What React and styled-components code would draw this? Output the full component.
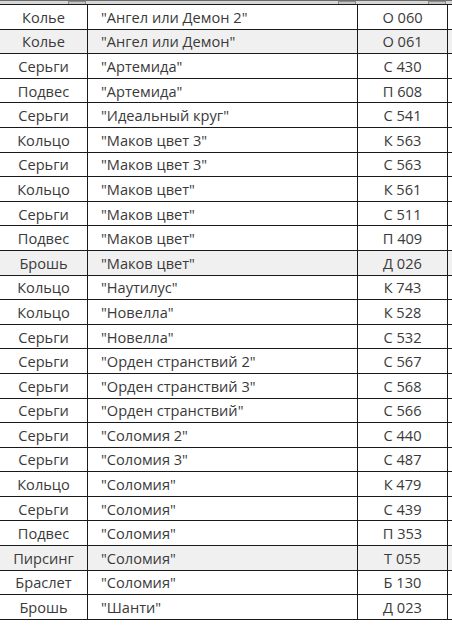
import styled, { createGlobalStyle } from 'styled-components';

const GlobalStyle = createGlobalStyle`
  html, body {
    margin: 0;
    padding: 0;
    background: #ffffff;
  }
  body {
    font-family: "Open Sans", "Noto Sans", sans-serif;
  }
`;

const COLS = '88px 270px 90px 4px';

const Sheet = styled.div`
  width: 452px;
  height: 626px;
  overflow: hidden;
  background: #ffffff;
`;

const HeaderStrip = styled.div`
  display: grid;
  grid-template-columns: ${COLS};
  height: 3px;
  border-top: 1px solid #6a6a6a;
  border-bottom: 1px solid #1a1a1a;
  background: #d6d6d6;
  overflow: hidden;
`;

const HeaderCell = styled.div`
  display: flex;
  justify-content: flex-end;
  align-items: flex-end;
  padding-right: 2px;
`;

const FilterButton = styled.div`
  width: 18px;
  height: 16px;
  box-sizing: border-box;
  border: 1px solid #8c8c8c;
  background: #c4c4c4;
`;

const Row = styled.div`
  display: grid;
  grid-template-columns: ${COLS};
  height: 24.6px;
  box-sizing: border-box;
  border-bottom: 1px solid #1a1a1a;
  background: ${(p) => (p.$shade ? '#f0f0f0' : '#ffffff')};
`;

const Cell = styled.div`
  display: flex;
  align-items: center;
  justify-content: ${(p) => p.$align || 'center'};
  padding-left: ${(p) => (p.$align === 'flex-start' ? '13px' : '0')};
  border-right: ${(p) => (p.$last ? 'none' : '1px solid #1a1a1a')};
  font-size: 14.6px;
  font-weight: 400;
  color: #3a3a3a;
  white-space: nowrap;
  overflow: hidden;
`;

const rows = [
  ['Колье', '"Ангел или Демон 2"', 'О 060', false],
  ['Колье', '"Ангел или Демон"', 'О 061', true],
  ['Серьги', '"Артемида"', 'С 430', false],
  ['Подвес', '"Артемида"', 'П 608', false],
  ['Серьги', '"Идеальный круг"', 'С 541', false],
  ['Кольцо', '"Маков цвет 3"', 'К 563', false],
  ['Серьги', '"Маков цвет 3"', 'С 563', false],
  ['Кольцо', '"Маков цвет"', 'К 561', false],
  ['Серьги', '"Маков цвет"', 'С 511', false],
  ['Подвес', '"Маков цвет"', 'П 409', false],
  ['Брошь', '"Маков цвет"', 'Д 026', true],
  ['Кольцо', '"Наутилус"', 'К 743', false],
  ['Кольцо', '"Новелла"', 'К 528', false],
  ['Серьги', '"Новелла"', 'С 532', false],
  ['Серьги', '"Орден странствий 2"', 'С 567', false],
  ['Серьги', '"Орден странствий 3"', 'С 568', false],
  ['Серьги', '"Орден странствий"', 'С 566', false],
  ['Серьги', '"Соломия 2"', 'С 440', false],
  ['Серьги', '"Соломия 3"', 'С 487', false],
  ['Кольцо', '"Соломия"', 'К 479', false],
  ['Серьги', '"Соломия"', 'С 439', false],
  ['Подвес', '"Соломия"', 'П 353', false],
  ['Пирсинг', '"Соломия"', 'Т 055', true],
  ['Браслет', '"Соломия"', 'Б 130', false],
  ['Брошь', '"Шанти"', 'Д 023', false],
];

export default function App() {
  return (
    <Sheet>
      <GlobalStyle />
      <HeaderStrip>
        <HeaderCell><FilterButton /></HeaderCell>
        <HeaderCell><FilterButton /></HeaderCell>
        <HeaderCell><FilterButton /></HeaderCell>
        <HeaderCell />
      </HeaderStrip>
      {rows.map(([type, name, code, shade]) => (
        <Row key={code + name} $shade={shade}>
          <Cell>{type}</Cell>
          <Cell $align="flex-start">{name}</Cell>
          <Cell>{code}</Cell>
          <Cell $last />
        </Row>
      ))}
    </Sheet>
  );
}
